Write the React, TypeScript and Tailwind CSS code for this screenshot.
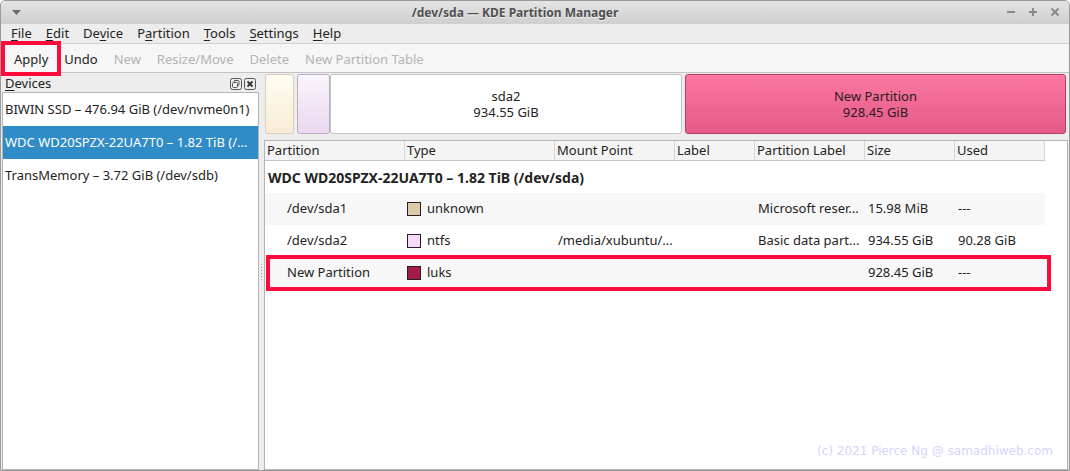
import React from "react";

const menus = [
  { label: "File", u: 0 },
  { label: "Edit", u: 0 },
  { label: "Device", u: 2 },
  { label: "Partition", u: 1 },
  { label: "Tools", u: 0 },
  { label: "Settings", u: 0 },
  { label: "Help", u: 0 },
];

const devices = [
  { name: "BIWIN SSD – 476.94 GiB (/dev/nvme0n1)", selected: false },
  { name: "WDC WD20SPZX-22UA7T0 – 1.82 TiB (/...", selected: true },
  { name: "TransMemory – 3.72 GiB (/dev/sdb)", selected: false },
];

const columns = [
  { label: "Partition", w: "w-[140px]" },
  { label: "Type", w: "w-[150px]" },
  { label: "Mount Point", w: "w-[120px]" },
  { label: "Label", w: "w-[80px]" },
  { label: "Partition Label", w: "w-[110px]" },
  { label: "Size", w: "w-[90px]" },
  { label: "Used", w: "w-[90px]" },
];

const rows = [
  {
    part: "/dev/sda1",
    color: "bg-[#dccbaa]",
    type: "unknown",
    mount: "",
    label: "",
    plabel: "Microsoft reser...",
    size: "15.98 MiB",
    used: "---",
    alt: true,
  },
  {
    part: "/dev/sda2",
    color: "bg-[#f6d8f8]",
    type: "ntfs",
    mount: "/media/xubuntu/...",
    label: "",
    plabel: "Basic data part...",
    size: "934.55 GiB",
    used: "90.28 GiB",
    alt: false,
  },
  {
    part: "New Partition",
    color: "bg-[#a61b4a]",
    type: "luks",
    mount: "",
    label: "",
    plabel: "",
    size: "928.45 GiB",
    used: "---",
    alt: true,
  },
];

function MenuLabel({ label, u }: { label: string; u: number }) {
  return (
    <span>
      {label.slice(0, u)}
      <span className="underline underline-offset-2">{label[u]}</span>
      {label.slice(u + 1)}
    </span>
  );
}

export default function App() {
  return (
    <div
      className="relative w-[1070px] h-[471px] overflow-hidden bg-[#ededed] text-[13px] text-[#232323] flex flex-col border border-[#9a9a9a] rounded-t-[5px]"
      style={{ fontFamily: '"Noto Sans", "DejaVu Sans", sans-serif' }}
    >
      {/* title bar */}
      <div className="h-[23px] shrink-0 flex items-center bg-gradient-to-b from-[#e4e4e4] to-[#cfcfcf] relative">
        <svg className="absolute left-[11px] top-[9px]" width="9" height="6" viewBox="0 0 9 6">
          <path d="M0 0 L9 0 L4.5 5 Z" fill="#6a6a6a" />
        </svg>
        <div className="flex-1 text-center pr-[40px] font-bold text-[#4f4f4f] text-[12px] [text-shadow:0_1px_0_#f2f2f2]">
          /dev/sda — KDE Partition Manager
        </div>
        <div className="absolute right-[9px] top-[6px] flex gap-[12px] items-center">
          <svg width="10" height="10" viewBox="0 0 10 10">
            <path d="M1 5 H9" stroke="#8a8a8a" strokeWidth="2" />
          </svg>
          <svg width="10" height="10" viewBox="0 0 10 10">
            <path d="M1 5 H9 M5 1 V9" stroke="#8a8a8a" strokeWidth="2" />
          </svg>
          <svg width="10" height="10" viewBox="0 0 10 10">
            <path d="M1.5 1.5 L8.5 8.5 M8.5 1.5 L1.5 8.5" stroke="#8a8a8a" strokeWidth="2" />
          </svg>
        </div>
      </div>

      {/* menu bar */}
      <div className="h-[20px] shrink-0 flex items-center gap-[14px] pl-[10px] bg-[#ededed] border-b border-[#d2d2d2]">
        {menus.map((m) => (
          <MenuLabel key={m.label} label={m.label} u={m.u} />
        ))}
      </div>

      {/* toolbar */}
      <div className="h-[29px] shrink-0 flex items-center bg-[#f6f6f6] border-b border-[#c4c4c4] pl-[13px] pt-[3px] gap-[16px]">
        <span>Apply</span>
        <span>Undo</span>
        <span className="text-[#b4b4b4]">New</span>
        <span className="text-[#b4b4b4]">Resize/Move</span>
        <span className="text-[#b4b4b4]">Delete</span>
        <span className="text-[#b4b4b4]">New Partition Table</span>
      </div>

      {/* main */}
      <div className="flex-1 flex min-h-0">
        {/* devices dock */}
        <div className="w-[258px] shrink-0 flex flex-col">
          <div className="h-[19px] flex items-center justify-between pl-[4px] pr-[3px] pt-[3px]">
            <span>
              <span className="underline underline-offset-2">D</span>evices
            </span>
            <div className="flex gap-[2px]">
              <svg width="12" height="12" viewBox="0 0 12 12">
                <rect x="0.5" y="0.5" width="11" height="11" rx="2" fill="none" stroke="#555" />
                <rect x="4" y="2.5" width="5" height="5" rx="1" fill="none" stroke="#555" />
                <rect x="2.5" y="4.5" width="5" height="5" rx="1" fill="#ededed" stroke="#555" />
              </svg>
              <svg width="12" height="12" viewBox="0 0 12 12">
                <rect x="0.5" y="0.5" width="11" height="11" rx="2" fill="none" stroke="#555" />
                <path d="M3.5 3.5 L8.5 8.5 M8.5 3.5 L3.5 8.5" stroke="#333" strokeWidth="1.8" />
              </svg>
            </div>
          </div>
          <div className="flex-1 ml-[1px] bg-white border border-[#b4b4b4]">
            {devices.map((d) => (
              <div
                key={d.name}
                className={`h-[33px] flex items-center pl-[2px] whitespace-nowrap overflow-hidden ${
                  d.selected ? "bg-[#308cc6] text-white" : ""
                }`}
              >
                {d.name}
              </div>
            ))}
          </div>
        </div>

        {/* splitter */}
        <div className="w-[5px] shrink-0 flex flex-col items-center justify-center gap-[2px]">
          {[0, 1, 2, 3, 4, 5].map((i) => (
            <div key={i} className="w-[1px] h-[1px] bg-[#9a9a9a]" />
          ))}
        </div>

        {/* right side */}
        <div className="flex-1 flex flex-col min-w-0 pr-[1px]">
          {/* partition bar */}
          <div className="h-[60px] mt-[1px] flex items-stretch pl-[1px] pr-[2px] gap-[3px]">
            <div className="w-[29px] rounded-[3px] border border-[#d9cfb4] bg-gradient-to-b from-[#fffcf2] to-[#f7ecd6]" />
            <div className="w-[33px] rounded-[3px] border border-[#bfa8c6] bg-gradient-to-b from-[#fbf5fc] to-[#e9d7ee]" />
            <div className="w-[352px] -ml-[3px] rounded-[3px] border border-[#c4c4c4] bg-white flex flex-col items-center justify-center leading-[16px]">
              <span>sda2</span>
              <span>934.55 GiB</span>
            </div>
            <div className="flex-1 rounded-[3px] border border-[#b83a66] bg-gradient-to-b from-[#fb78a1] to-[#e45a87] flex flex-col items-center justify-center leading-[16px] text-[#2b1a20]">
              <span>New Partition</span>
              <span>928.45 GiB</span>
            </div>
          </div>

          {/* tree view */}
          <div className="flex-1 mt-[6px] bg-white border border-[#b4b4b4] flex flex-col">
            <div className="h-[20px] flex bg-[#f4f4f4] border-b border-[#c4c4c4] w-[780px]">
              {columns.map((c) => (
                <div
                  key={c.label}
                  className={`${c.w} shrink-0 pl-[2px] flex items-center border-r border-[#d6d6d6]`}
                >
                  {c.label}
                </div>
              ))}
            </div>
            <div className="h-[32px] flex items-center pl-[3px] font-bold text-[14px]">
              WDC WD20SPZX-22UA7T0 – 1.82 TiB (/dev/sda)
            </div>
            {rows.map((r) => (
              <div
                key={r.part}
                className={`h-[32px] w-[780px] flex items-center ${r.alt ? "bg-[#f7f7f7]" : "bg-white"}`}
              >
                <div className="w-[140px] shrink-0 pl-[22px]">{r.part}</div>
                <div className="w-[150px] shrink-0 pl-[2px] flex items-center gap-[6px]">
                  <span className={`w-[14px] h-[14px] border border-[#222] ${r.color}`} />
                  <span>{r.type}</span>
                </div>
                <div className="w-[120px] shrink-0 pl-[3px]">{r.mount}</div>
                <div className="w-[80px] shrink-0 pl-[3px]">{r.label}</div>
                <div className="w-[110px] shrink-0 pl-[3px] whitespace-nowrap">{r.plabel}</div>
                <div className="w-[90px] shrink-0 pl-[3px]">{r.size}</div>
                <div className="w-[90px] shrink-0 pl-[3px]">{r.used}</div>
              </div>
            ))}
            <div className="flex-1 flex items-end justify-end pr-[14px] pb-[9px]">
              <span
                className="text-[12px] text-[#d4d4fa]"
                style={{ fontFamily: '"DejaVu Sans", sans-serif' }}
              >
                (c) 2021 Pierce Ng @ samadhiweb.com
              </span>
            </div>
          </div>
        </div>
      </div>

      {/* red annotation boxes */}
      <div className="absolute left-[0px] top-[40px] w-[60px] h-[35px] border-[4px] border-[#ff0a3a]" />
      <div className="absolute left-[265px] top-[254px] w-[785px] h-[36px] border-[4px] border-[#ff0a3a]" />
    </div>
  );
}
